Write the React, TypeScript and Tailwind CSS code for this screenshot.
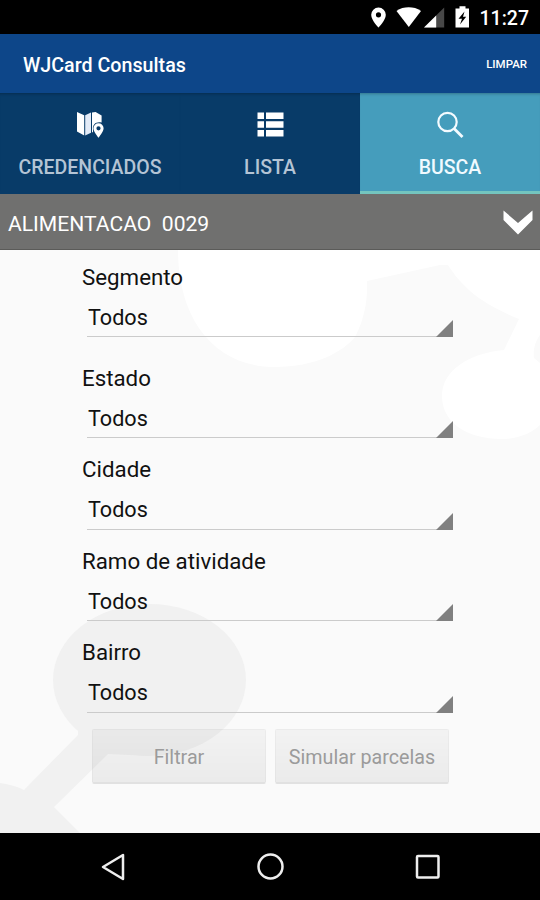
import { useState } from "react";
import type { ReactNode } from "react";

interface FieldType {
  label: string;
  value: string;
  spacing: string;
}

interface TabType {
  name: string;
  icon: ReactNode;
}

const fields: FieldType[] = [
  { label: "Segmento", value: "Todos", spacing: "mb-[21px]" },
  { label: "Estado", value: "Todos", spacing: "mb-[11.5px]" },
  { label: "Cidade", value: "Todos", spacing: "mb-[11.5px]" },
  { label: "Ramo de atividade", value: "Todos", spacing: "mb-[11.5px]" },
  { label: "Bairro", value: "Todos", spacing: "mb-[16.5px]" },
];

const MapIcon = () => (
  <svg width="28" height="28" viewBox="0 0 28 28">
    <path d="M1 1 8.2 4.2V24.6L1 20.6Z" fill="#fff" />
    <path d="M9.2 4.2 15 1.4V21.8L9.2 24.6Z" fill="#e3ebf7" />
    <path d="M16 1.4 19.6 1 25.6 4.4V11.6C20.5 10.2 16.3 13.2 17 18.4V21L16 21.4Z" fill="#fff" />
    <path
      fillRule="evenodd"
      d="M22.5 12.2a5.1 5.1 0 0 0-5.1 5.1c0 3.4 5.1 9.4 5.1 9.4s5.1-6 5.1-9.4a5.1 5.1 0 0 0-5.1-5.1Zm0 3a2.1 2.1 0 1 1 0 4.2 2.1 2.1 0 0 1 0-4.2Z"
      fill="#fff"
    />
  </svg>
);

const ListIcon = () => (
  <svg width="28" height="28" viewBox="0 0 28 28" fill="#fff">
    <path d="M1.5 1.5h6.5v6.4H1.5zM10 1.5h17.5v6.4H10zM1.5 10.3h6.5v6.4H1.5zM10 10.3h17.5v6.4H10zM1.5 19h6.5v6.4H1.5zM10 19h17.5v6.4H10z" />
  </svg>
);

const SearchIcon = () => (
  <svg width="28" height="28" viewBox="0 0 28 28" fill="none" stroke="#f4fbff">
    <circle cx="11.5" cy="11" r="9.2" strokeWidth="2.2" />
    <path d="m18 17.5 8.5 8.5" strokeWidth="2.8" />
  </svg>
);

const tabs: TabType[] = [
  { name: "Credenciados", icon: <MapIcon /> },
  { name: "Lista", icon: <ListIcon /> },
  { name: "Busca", icon: <SearchIcon /> },
];

const StatusBar = () => (
  <div className="flex h-[34px] items-center justify-end bg-black pr-[11px] text-white">
    <svg width="98" height="24" viewBox="0 0 98 24" className="mr-[11px]" fill="#fff">
      <path
        fillRule="evenodd"
        d="M7.5 2.5A7.3 7.3 0 0 0 .2 9.8C.2 15.3 7.5 22.6 7.5 22.6s7.3-7.3 7.3-12.8A7.3 7.3 0 0 0 7.5 2.500Zm0 4.700a2.600 2.600 0 1 1 0 5.200 2.600 2.600 0 0 1 0-5.200Z"
      />
      <path d="M25.5 6C29 3.2 33.5 2.3 37.7 2.3S46.4 3.2 50 6.1L37.8 22Z" />
      <path d="M73.2 2.5V22.5H53Z" fill="#484848" />
      <path d="M65.2 10.4V22.5H53Z" />
      <path
        fillRule="evenodd"
        d="M88.5 1.2h6v2.3h4V22.5H84.5V3.5h4zM93.500 6.500l-6 7.200h3.500l-2 5.800 6.200-7.800H92z"
      />
    </svg>
    <span className="pt-[3px] text-[19.5px] font-medium leading-none">11:27</span>
  </div>
);

// faint blobs behind the form
const Backdrop = () => (
  <svg
    className="absolute inset-0"
    width="540"
    height="583"
    viewBox="0 250 540 583"
    fill="none"
  >
    <path d="M178 250C178 320 215 367 275 367 315 367 343 352 355 337 364 320 368 300 367 281L440 265H448C462 287 480 303 519 319L504 350C470 353 442 370 442 396 442 423 468 439 501 439 518 439 532 433 540 425V250Z" fill="#fff" />
    <path d="M540 335C534 343 533 352 534 358L540 363Z" fill="#fafafa" />
    <ellipse cx="149.5" cy="680" rx="96.5" ry="76" fill="#f1f1f1" />
    <path d="M78 735 24 790C16 786 8 784 0 783V833H80L54 807 108 754 149 756V720H78Z" fill="#f1f1f1" />
  </svg>
);

const Field = ({ label, value, spacing }: FieldType) => (
  <div className={spacing}>
    <label className="flex h-10 items-center pt-px text-[22.3px]">{label}</label>
    <button
      type="button"
      className="ml-[5px] flex h-10 w-[366px] items-center justify-between border-b border-[#cbcbcb] text-left"
    >
      <span className="pl-px pt-[3px] text-[21.6px]">{value}</span>
      <svg width="17" height="17" viewBox="0 0 17 17" className="-mb-px self-end">
        <path d="M17 0V17H0Z" fill="#808080" />
      </svg>
    </button>
  </div>
);

const App = () => {
  const [currentTab, setCurrentTab] = useState(2);

  return (
    <div className="flex h-[900px] w-[540px] flex-col overflow-hidden bg-[#fafafa] font-[Roboto,sans-serif] text-[#111]">
      <StatusBar />

      <header className="flex h-[59px] items-center justify-between bg-[#0d4689] pl-[23px] pr-[13px] text-white">
        <h1 className="pt-1 text-[19.7px] font-medium">WJCard Consultas</h1>
        <button className="pt-[3px] text-[11.5px] font-medium uppercase">Limpar</button>
      </header>

      <nav className="grid h-[101px] grid-cols-3 bg-[#083b68]">
        {tabs.map((tab, i) => (
          <button
            key={tab.name}
            onClick={() => setCurrentTab(i)}
            className={`flex flex-col items-center border-b-[3px] pt-[18px] text-[19.5px] font-medium uppercase shadow-[inset_0_3px_3px_-2px_rgba(0,0,0,0.25)] ${
              currentTab === i
                ? "border-[#74c5bf] bg-[#459dbc] text-[#f0faff]"
                : "border-transparent text-[#b4c4d5]"
            }`}
          >
            {tab.icon}
            <span className="mt-[15px] leading-7">{tab.name}</span>
          </button>
        ))}
      </nav>

      <div className="flex h-14 items-center justify-between border-b border-[#5b5b59] bg-[#70706f] pl-2 pr-[7px] text-white">
        <span className="whitespace-pre pt-[5px] text-[21.1px]">ALIMENTACAO  0029</span>
        <svg width="30" height="25" viewBox="0 0 30 25" fill="#fff" className="mt-0.5">
          <path d="M.5 .5 15 13 29.5 .5V10L15 24.5.5 10Z" />
        </svg>
      </div>

      <main className="relative h-[583px]">
        <Backdrop />
        <form className="relative pl-[82px] pt-[7px]">
          {fields.map((field) => (
            <Field key={field.label} {...field} />
          ))}
          <div className="ml-2.5 flex gap-[9px] text-[19.7px] text-[#9b9b9b]">
            {["Filtrar", "Simular parcelas"].map((name) => (
              <button
                key={name}
                type="button"
                disabled
                className="h-[55px] w-[174px] rounded-[2px] border border-b-2 border-black/3 border-t-transparent border-b-black/7 bg-linear-to-b from-black/3 to-black/6 pt-[3px]"
              >
                {name}
              </button>
            ))}
          </div>
        </form>
      </main>

      <footer className="flex h-[67px] items-center justify-between bg-black pl-[100px] pr-[99px]">
        <svg width="28" height="28" viewBox="0 0 28 28" fill="none" stroke="#eee" strokeWidth="2.5" strokeLinejoin="round">
          <path d="M23 2V26L3 14Z" />
        </svg>
        <svg width="28" height="28" viewBox="0 0 28 28" fill="none" stroke="#eee" strokeWidth="2.5">
          <circle cx="13.5" cy="13.5" r="12" />
        </svg>
        <svg width="28" height="28" viewBox="0 0 28 28" fill="none" stroke="#eee" strokeWidth="2.5">
          <rect x="4" y="3" width="21.5" height="21.5" rx="1" />
        </svg>
      </footer>
    </div>
  );
};

export default App;
